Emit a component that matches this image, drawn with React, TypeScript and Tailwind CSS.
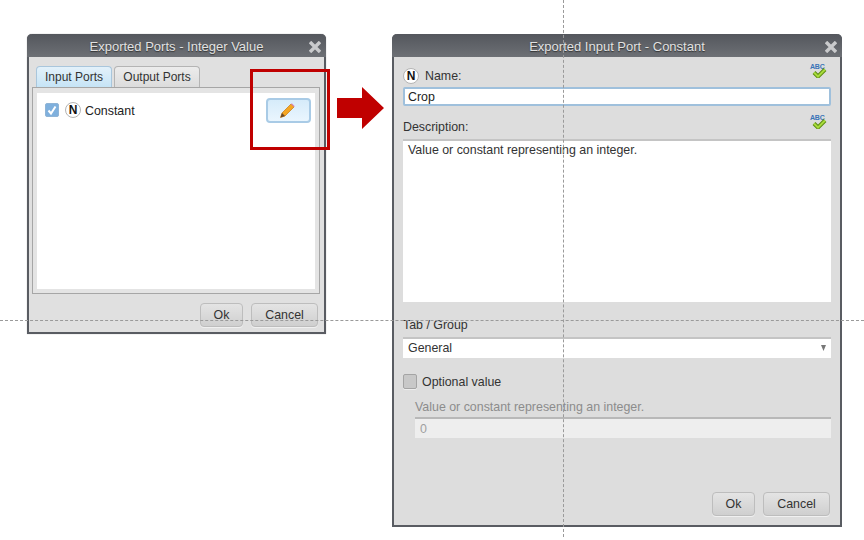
const font = { fontFamily: '"Liberation Sans", Arial, sans-serif' };

function NIcon() {
  return (
    <span className="flex h-[16px] w-[16px] shrink-0 items-center justify-center rounded-full border border-[#b4b4b4] bg-white text-[12px] font-bold leading-none text-[#111]">
      N
    </span>
  );
}

function Btn({ label, w }: { label: string; w: string }) {
  return (
    <button className={`${w} h-[24px] rounded-[4px] border border-[#bdbdbd] bg-gradient-to-b from-[#e4e4e4] to-[#cfcfcf] text-[12.4px] text-[#333] shadow-[0_1px_0_#f0f0f0]`}>
      {label}
    </button>
  );
}

function TitleBar({ title }: { title: string }) {
  return (
    <div className="relative flex h-[23px] shrink-0 items-center justify-center rounded-t-[5px] bg-gradient-to-b from-[#54575d] to-[#6d7075] pt-[3px] text-[13px] text-[#e2e2e2] [text-shadow:0_1px_1px_#333]">
      {title}
      <svg className="absolute right-[5px] top-[7px] h-[12px] w-[12px]" viewBox="0 0 12 12">
        <path d="M1 1 11 11M11 1 1 11" stroke="#c9cacc" strokeWidth="3.4" />
      </svg>
    </div>
  );
}

function Spell() {
  return (
    <span className="relative block h-[15px] w-[17px]">
      <span className="absolute left-0 top-0 text-[7px] font-bold leading-[7px] tracking-[-0.2px] text-[#3a74b8]">ABC</span>
      <svg className="absolute bottom-0 left-[2px] h-[10px] w-[15px]" viewBox="0 0 15 10">
        <path d="M2 4.5 6 8.5 13 1.5" fill="none" stroke="#5c8a12" strokeWidth="4" />
        <path d="M2 4.5 6 8.5 13 1.5" fill="none" stroke="#a8dc3c" strokeWidth="2" />
      </svg>
    </span>
  );
}

function Field({ className = '', children }: { className?: string; children?: React.ReactNode }) {
  return <div className={`border-t-2 border-[#c4c4c4] bg-white ${className}`}>{children}</div>;
}

export default function App() {
  return (
    <div className="relative h-[540px] w-[864px] overflow-hidden bg-white text-[12.4px] text-[#333]" style={font}>
      {/* Left window */}
      <div className="absolute left-[27px] top-[34px] flex h-[300px] w-[299px] flex-col rounded-t-[5px] border-x-2 border-b-2 border-[#595c62] bg-[#e0e0e0] shadow-[0_0_1px_#888]">
        <div className="-mx-[2px]"><TitleBar title="Exported Ports - Integer Value" /></div>
        <div className="flex flex-1 flex-col pl-[3px] pr-[4px] pt-[9px]">
          <div className="flex gap-[2px] pl-[4px] text-[12px]">
            <div className="flex h-[21px] w-[76px] items-center justify-center rounded-t-[4px] border border-b-0 border-[#a9c6dc] bg-gradient-to-b from-[#e3f1fa] to-[#c6e4f6] text-[#333]">Input Ports</div>
            <div className="flex h-[21px] w-[86px] items-center justify-center rounded-t-[4px] border border-b-0 border-[#b4b4b4] bg-gradient-to-b from-[#ececec] to-[#dcdcdc] text-[#333]">Output Ports</div>
          </div>
          <div className="h-[207px] border border-[#a6a6a6] bg-[#e4e4e4] p-[4px] pt-[5px]">
            <div className="flex h-full items-start bg-white pl-[8px] pr-[4px] pt-[5px]">
              <div className="mt-[5px] flex h-[14px] w-[14px] items-center justify-center rounded-[2px] border border-[#8fb4d6] bg-[#7fb0dd]">
                <svg className="h-[12px] w-[12px]" viewBox="0 0 12 12"><path d="M2.5 6.5 5 9.5 9.5 2.5" fill="none" stroke="#fff" strokeWidth="2" /></svg>
              </div>
              <div className="ml-[6px] mt-[4px]"><NIcon /></div>
              <span className="ml-[4px] mt-[4px] text-[#222]">Constant</span>
              <button className="ml-auto flex h-[25px] w-[45px] items-center justify-center rounded-[4px] border-2 border-[#a9cbe6] bg-gradient-to-b from-[#d6ebfa] to-[#eaf6fe]">
                <svg className="-ml-[2px] h-[17px] w-[17px]" viewBox="0 0 17 17">
                  <path d="M1.5 15.5 3 11 12 2 15 5 6 14Z" fill="#f5a623" stroke="#c77a10" strokeWidth=".7" />
                  <path d="M1.5 15.5 3 11 6 14Z" fill="#6b4a2a" />
                  <path d="M12.8 1.2 15.8 4.2 15 5 12 2Z" fill="#d987b8" />
                </svg>
              </button>
            </div>
          </div>
          <div className="mt-[9px] flex justify-end gap-[8px] pr-[2px]">
            <Btn label="Ok" w="w-[43px]" />
            <Btn label="Cancel" w="w-[67px]" />
          </div>
        </div>
      </div>

      {/* Highlight box */}
      <div className="absolute left-[250px] top-[69px] h-[81px] w-[80px] border-[3px] border-[#c00000]" />

      {/* Arrow */}
      <svg className="absolute left-[337px] top-[87px] h-[42px] w-[47px]" viewBox="0 0 47 42">
        <path d="M0 11H25V0L47 21 25 42V31H0Z" fill="#c00000" />
      </svg>

      {/* Right window */}
      <div className="absolute left-[392px] top-[34px] flex h-[493px] w-[450px] flex-col rounded-t-[5px] border-x-2 border-b-2 border-[#595c62] bg-[#dddddd]">
        <div className="-mx-[2px]"><TitleBar title="Exported Input Port - Constant" /></div>
        <div className="relative flex flex-1 flex-col px-[9px]">
          <div className="mt-[11px] flex h-[16px] items-center gap-[6px]">
            <NIcon />
            <span>Name:</span>
          </div>
          <div className="absolute right-[13px] top-[6px]"><Spell /></div>
          <input readOnly value="Crop" className="mt-[3px] h-[19px] w-full rounded-[2px] border-2 border-[#9fc0dc] bg-white px-[3px] text-[12.4px] text-[#222] outline-none" />
          <div className="mt-[14px] h-[14px] leading-[14px]">Description:</div>
          <div className="absolute right-[13px] top-[57px]"><Spell /></div>
          <Field className="mt-[5px] h-[163px] px-[5px] text-[#333]">Value or constant representing an integer.</Field>
          <div className="mt-[16px] h-[14px] leading-[14px]">Tab / Group</div>
          <Field className="mt-[5px] flex h-[21px] items-center justify-between pb-[1px] pl-[5px] pr-[5px]">
            <span>General</span>
            <svg className="h-[6px] w-[5px]" viewBox="0 0 5 6"><path d="M0 0H5L2.5 6Z" fill="#777" /></svg>
          </Field>
          <div className="mt-[16px] flex h-[15px] items-center gap-[5px]">
            <span className="h-[15px] w-[14px] rounded-[2px] border border-[#a4a4a4] bg-[#c8c8c8] shadow-[0_1px_0_#eee]" />
            <span className="mt-[2px]">Optional value</span>
          </div>
          <div className="ml-[12px] mt-[11px] h-[14px] leading-[14px] text-[#8c8c8c]">Value or constant representing an integer.</div>
          <div className="ml-[12px] mt-[3px] flex h-[21px] items-center border-t-2 border-[#b8b8b8] bg-[#eeeeee] px-[5px] pt-[1px] text-[#a0a0a0]">0</div>
          <div className="mt-[54px] flex justify-end gap-[8px] pr-px">
            <Btn label="Ok" w="w-[43px]" />
            <Btn label="Cancel" w="w-[67px]" />
          </div>
        </div>
      </div>

      {/* Guides */}
      <div className="absolute left-0 top-[320px] w-[864px] border-t border-dashed border-[#9a9a9a]" />
      <div className="absolute left-[563px] top-0 h-[537px] border-l border-dashed border-[#9a9a9a]" />
    </div>
  );
}
